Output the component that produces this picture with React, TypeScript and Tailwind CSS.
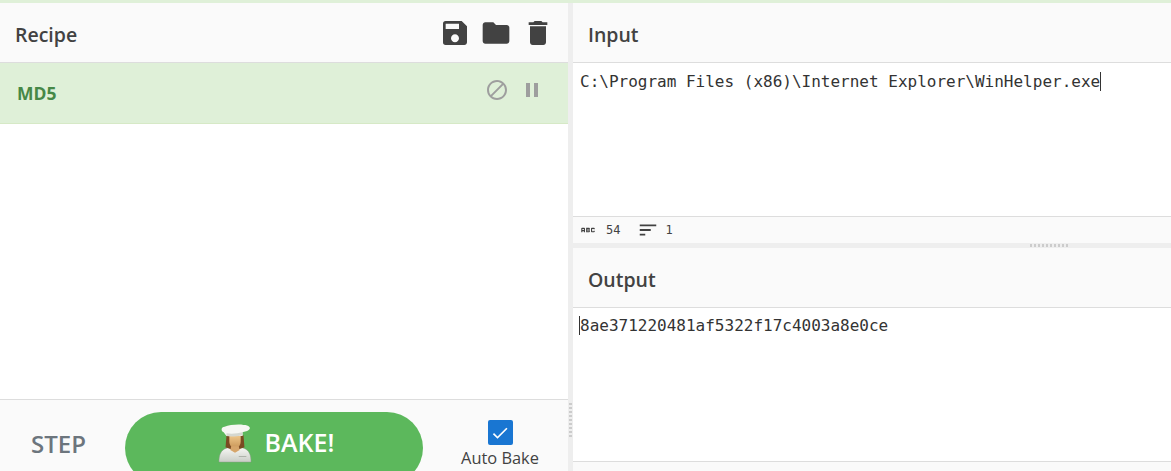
import { MdAbc, MdBlock, MdCheck, MdDelete, MdFolder, MdPause, MdSave, MdSort } from 'react-icons/md';

const sans = "font-['Open_Sans','Noto_Sans',sans-serif]";
const mono = "font-['DejaVu_Sans_Mono',monospace]";

function ChefIcon() {
  return (
    <svg width="34" height="39" viewBox="0 0 36 42" preserveAspectRatio="none">
      <defs>
        <linearGradient id="coat" x1="0" y1="0" x2="0" y2="1">
          <stop offset="0" stopColor="#fbfbf8" />
          <stop offset="1" stopColor="#c9cdc6" />
        </linearGradient>
        <linearGradient id="face" x1="0" y1="0" x2="0" y2="1">
          <stop offset="0" stopColor="#f0c98c" />
          <stop offset="1" stopColor="#c99658" />
        </linearGradient>
      </defs>
      <path d="M1 41c0-8 2-13 8-15l5-2h8l5 2c6 2 8 7 8 15z" fill="url(#coat)" stroke="#8d9a88" strokeWidth="0.5" />
      <path d="M9 12h18l1 13-5 2h-10l-5-2z" fill="#7a4a22" />
      <path d="M12 12h12v7c0 4-3 7-6 7s-6-3-6-7z" fill="url(#face)" />
      <path d="M14 24h8l1 4-5 3-5-3z" fill="#d6a56a" />
      <path d="M6 9c-3-1-3-6 1-6 5-2 14-3 20-2 6 0 8 3 6 5-1 2-5 2-7 3v4H9z" fill="#f6f7f3" />
      <path d="M9 10c6 1 12 0 17-1v3c-5 1-12 2-17 1z" fill="#d5d8d0" />
      <path d="M22 35h8" stroke="#aab0a6" strokeWidth="1" />
    </svg>
  );
}

function PanelHeader({ title, children }: { title: string; children?: React.ReactNode }) {
  return (
    <div className="flex h-[60px] shrink-0 items-center justify-between border-b border-[#dddddd] bg-[#fafafa] pl-[15px] pr-[14px]">
      <span className="mt-[4px] text-[19.5px] font-semibold text-[#424242]">{title}</span>
      {children}
    </div>
  );
}

export default function App() {
  return (
    <div className={`flex h-[471px] w-[1171px] flex-col overflow-hidden bg-white ${sans}`}>
      <div className="h-[3px] shrink-0 bg-[#dff0d8]" />
      <div className="flex min-h-0 flex-1">
        <div className="flex w-[568px] shrink-0 flex-col">
          <PanelHeader title="Recipe">
            <div className="flex items-center gap-[9px] text-[#424242]">
              <MdSave size={32} />
              <MdFolder size={32} />
              <MdDelete size={32} className="ml-[1px]" />
            </div>
          </PanelHeader>
          <div className="flex h-[61px] shrink-0 items-center justify-between border-b border-[#d6e9c6] bg-[#dff0d8] pl-[17px] pr-[24px]">
            <span className="text-[17.5px] font-bold text-[#468847]">MD5</span>
            <div className="-mt-[7px] flex items-center gap-[11px] text-[#9e9e9e]">
              <MdBlock size={24} />
              <MdPause size={24} />
            </div>
          </div>
          <div className="flex-1" />
          <div className="flex h-[72px] shrink-0 items-start border-t border-[#dddddd] bg-[#fafafa] pt-[12px]">
            <span className="mt-[17px] ml-[31px] w-[94px] text-[24px] font-semibold leading-[30px] text-[#6c757d]">STEP</span>
            <div className="flex h-[72px] w-[298px] shrink-0 items-start justify-center gap-[13px] rounded-full bg-[#5cb85c] pt-[12px] pl-[4px]">
              <ChefIcon />
              <span className="mt-[3px] text-[25px] font-semibold leading-[30px] text-white">BAKE!</span>
            </div>
            <div className="ml-[38px] flex w-[78px] flex-col items-center">
              <div className="mt-[8px] flex h-[25px] w-[25px] items-center justify-center rounded-[2px] bg-[#1976d2] text-white">
                <MdCheck size={20} />
              </div>
              <span className="mt-[3px] whitespace-nowrap text-[16.4px] leading-[20px] text-[#424242]">Auto Bake</span>
            </div>
          </div>
        </div>

        <div className="relative w-[5px] shrink-0 bg-[#eeeeee]">
          <div className="absolute left-[1px] top-[400px] h-[36px] w-[3px] bg-[repeating-linear-gradient(to_bottom,#cccccc_0,#cccccc_2px,transparent_2px,transparent_4px)]" />
        </div>

        <div className="flex min-w-0 flex-1 flex-col">
          <PanelHeader title="Input" />
          <div className={`h-[153px] shrink-0 px-[7px] pt-[5px] text-[16px] leading-[27px] text-[#333333] ${mono}`}>
            <span className="border-r border-[#333333] whitespace-nowrap">C:\Program Files (x86)\Internet Explorer\WinHelper.exe</span>
          </div>
          <div className={`flex h-[27px] shrink-0 items-center border-t border-[#dddddd] bg-[#fafafa] pl-[6px] text-[12px] text-[#424242] ${mono}`}>
            <MdAbc size={18} />
            <span className="ml-[9px]">54</span>
            <MdSort size={22} className="ml-[17px]" />
            <span className="ml-[6px]">1</span>
          </div>
          <div className="relative h-[5px] shrink-0 bg-[#eeeeee]">
            <div className="absolute left-[457px] top-[1px] h-[3px] w-[38px] bg-[repeating-linear-gradient(to_right,#cccccc_0,#cccccc_2px,transparent_2px,transparent_4px)]" />
          </div>
          <PanelHeader title="Output" />
          <div className={`h-[153px] shrink-0 px-[7px] pt-[4px] text-[16px] leading-[27px] text-[#333333] ${mono}`}>
            <span className="border-l border-[#333333] -ml-px whitespace-nowrap">8ae371220481af5322f17c4003a8e0ce</span>
          </div>
          <div className="flex-1 border-t border-[#dddddd] bg-[#fafafa]" />
        </div>
      </div>
    </div>
  );
}
